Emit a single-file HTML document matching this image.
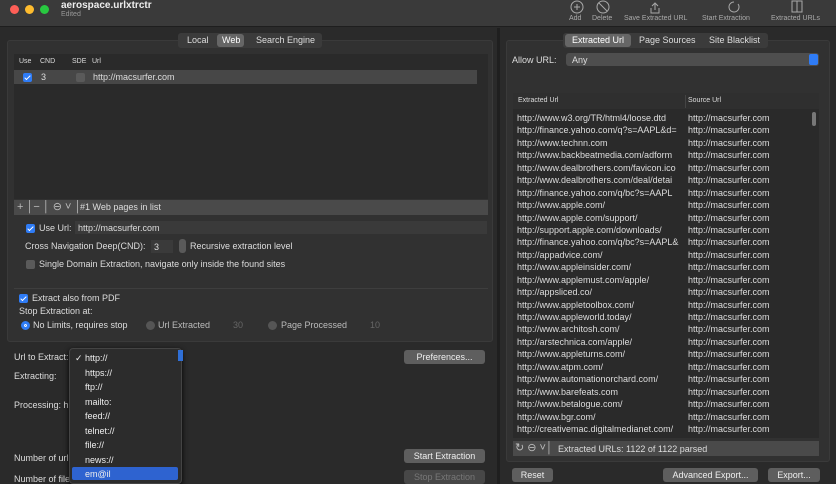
<!DOCTYPE html>
<html><head><meta charset="utf-8"><style>
*{box-sizing:border-box;margin:0;padding:0}
body{width:836px;height:484px;background:#2a2a2a;font-family:"Liberation Sans",sans-serif;font-size:9px;color:#ddd;position:relative;overflow:hidden}
.a{position:absolute;white-space:nowrap}
.btn{position:absolute;background:#5e5e5e;border-radius:3px;color:#eee;text-align:center;font-size:9px;line-height:14px}
.cb{position:absolute;width:9px;height:9px;border-radius:2px;background:#2f7cf6}
.cb::after{content:"";position:absolute;left:3px;top:1px;width:2px;height:5px;border:solid #fff;border-width:0 1.5px 1.5px 0;transform:rotate(45deg)}
.ucb{position:absolute;width:9px;height:9px;border-radius:2px;background:#5a5a5a}
.rows div{height:12.45px;line-height:12.45px}
.menu div{height:14.5px;line-height:14.5px;padding-left:10px}
</style></head><body>
<div class="a" style="left:0;top:0;width:836px;height:27px;background:#3a3a3a;border-bottom:1px solid #1e1e1e"></div>
<div class="a" style="left:10px;top:5px;width:9px;height:9px;border-radius:50%;background:#fe5f57"></div>
<div class="a" style="left:25px;top:5px;width:9px;height:9px;border-radius:50%;background:#febc2e"></div>
<div class="a" style="left:40px;top:5px;width:9px;height:9px;border-radius:50%;background:#28c840"></div>
<div class="a" style="left:61px;top:0px;font-size:10px;font-weight:bold;color:#eee">aerospace.urlxtrctr</div>
<div class="a" style="left:61px;top:11px;font-size:7px;color:#999">Edited</div>
<svg class="a" style="left:560px;top:0" width="276" height="26" fill="none" stroke="#aaa" stroke-width="1">
<circle cx="17" cy="7" r="6"/><path d="M17 4v6M14 7h6"/>
<circle cx="43" cy="7" r="6"/><path d="M39 3l8 8"/>
<path d="M95 4v6M92 6l3-3 3 3M91 8v5h8V8"/>
<path d="M174 2a5 5 0 1 0 4 2"/>
<rect x="232" y="1" width="10" height="11"/><path d="M237 1v11"/>
</svg>
<div class="a" style="left:569px;top:15px;font-size:7px;color:#aaa">Add</div>
<div class="a" style="left:592px;top:15px;font-size:7px;color:#aaa">Delete</div>
<div class="a" style="left:624px;top:15px;font-size:7px;color:#aaa">Save Extracted URL</div>
<div class="a" style="left:702px;top:15px;font-size:7px;color:#aaa">Start Extraction</div>
<div class="a" style="left:771px;top:15px;font-size:7px;color:#aaa">Extracted URLs</div>
<div class="a" style="left:497px;top:28px;width:3px;height:456px;background:#1f1f1f"></div>
<div class="a" style="left:7px;top:40px;width:486px;height:302px;background:#313131;border:1px solid #3a3a3a;border-radius:3px"></div>
<div class="a" style="left:178px;top:33px;width:144px;height:15px;background:#3b3b3b;border-radius:3px"></div>
<div class="a" style="left:217px;top:34px;width:27px;height:13px;background:#666;border-radius:3px"></div>
<div class="a" style="left:187px;top:35px;font-size:9px">Local</div>
<div class="a" style="left:222px;top:35px;font-size:9px;color:#fff">Web</div>
<div class="a" style="left:256px;top:35px;font-size:9px">Search Engine</div>
<div class="a" style="left:14px;top:54px;width:474px;height:145px;background:#2a2a2a"></div>
<div class="a" style="left:19px;top:58px;font-size:7px">Use</div>
<div class="a" style="left:40px;top:58px;font-size:7px">CND</div>
<div class="a" style="left:72px;top:58px;font-size:7px">SDE</div>
<div class="a" style="left:92px;top:58px;font-size:7px">Url</div>
<div class="a" style="left:14px;top:70px;width:463px;height:14px;background:#474747"></div>
<div class="cb" style="left:23px;top:73px"></div>
<div class="a" style="left:41px;top:72px">3</div>
<div class="ucb" style="left:76px;top:73px"></div>
<div class="a" style="left:93px;top:72px">http://macsurfer.com</div>
<div class="a" style="left:14px;top:200px;width:474px;height:15px;background:#4a4a4a"></div>
<div class="a" style="left:17px;top:200px;font-size:11px;color:#bbb">+ │− │ ⊖ ˅ │</div>
<div class="a" style="left:80px;top:202px">#1 Web pages in list</div>
<div class="cb" style="left:26px;top:224px"></div>
<div class="a" style="left:39px;top:223px">Use Url:</div>
<div class="a" style="left:75px;top:221px;width:412px;height:13px;background:#3a3a3a"></div>
<div class="a" style="left:78px;top:223px">http://macsurfer.com</div>
<div class="a" style="left:25px;top:241px">Cross Navigation Deep(CND):</div>
<div class="a" style="left:151px;top:240px;width:22px;height:13px;background:#3a3a3a"></div>
<div class="a" style="left:154px;top:242px">3</div>
<div class="a" style="left:179px;top:239px;width:7px;height:14px;background:#5a5a5a;border-radius:3px"></div>
<div class="a" style="left:190px;top:241px">Recursive extraction level</div>
<div class="ucb" style="left:26px;top:260px"></div>
<div class="a" style="left:39px;top:259px">Single Domain Extraction, navigate only inside the found sites</div>
<div class="a" style="left:14px;top:288px;width:474px;height:1px;background:#3e3e3e"></div>
<div class="cb" style="left:19px;top:294px"></div>
<div class="a" style="left:32px;top:293px">Extract also from PDF</div>
<div class="a" style="left:19px;top:306px">Stop Extraction at:</div>
<div class="a" style="left:21px;top:321px;width:9px;height:9px;border-radius:50%;background:#2f7cf6;border:3px solid #2f7cf6;box-shadow:inset 0 0 0 1px #fff"></div>
<div class="a" style="left:33px;top:320px">No Limits, requires stop</div>
<div class="a" style="left:146px;top:321px;width:9px;height:9px;border-radius:50%;background:#555"></div>
<div class="a" style="left:158px;top:320px;color:#bbb">Url Extracted</div>
<div class="a" style="left:233px;top:320px;color:#666">30</div>
<div class="a" style="left:268px;top:321px;width:9px;height:9px;border-radius:50%;background:#555"></div>
<div class="a" style="left:281px;top:320px;color:#bbb">Page Processed</div>
<div class="a" style="left:370px;top:320px;color:#666">10</div>
<div class="a" style="left:14px;top:352px">Url to Extract:</div>
<div class="a" style="left:14px;top:371px">Extracting:</div>
<div class="a" style="left:14px;top:400px">Processing: h</div>
<div class="a" style="left:14px;top:453px">Number of url</div>
<div class="a" style="left:14px;top:474px">Number of file</div>
<div class="btn" style="left:404px;top:350px;width:81px">Preferences...</div>
<div class="btn" style="left:404px;top:449px;width:81px">Start Extraction</div>
<div class="btn" style="left:404px;top:470px;width:81px;background:#474747;color:#777">Stop Extraction</div>
<div class="a" style="left:69px;top:348px;width:113px;height:136px;background:#2c2c2c;border:1px solid #444;border-radius:4px;box-shadow:0 2px 6px #000"></div>
<div class="a" style="left:178px;top:350px;width:5px;height:11px;background:#2f6fd6"></div>
<div class="a" style="left:72px;top:467px;width:106px;height:13px;background:#2e63d0;border-radius:2px"></div>
<div class="a menu" style="left:75px;top:351px;font-size:9px;color:#eee">
<div style="padding-left:0">✓ http://</div><div>https://</div><div>ftp://</div><div>mailto:</div><div>feed://</div><div>telnet://</div><div>file://</div><div>news://</div><div>em@il</div>
</div>
<div class="a" style="left:506px;top:40px;width:324px;height:422px;background:#313131;border:1px solid #3a3a3a;border-radius:3px"></div>
<div class="a" style="left:563px;top:33px;width:205px;height:15px;background:#3b3b3b;border-radius:3px"></div>
<div class="a" style="left:565px;top:34px;width:66px;height:13px;background:#666;border-radius:3px"></div>
<div class="a" style="left:572px;top:35px;color:#fff">Extracted Url</div>
<div class="a" style="left:639px;top:35px">Page Sources</div>
<div class="a" style="left:709px;top:35px">Site Blacklist</div>
<div class="a" style="left:512px;top:55px">Allow URL:</div>
<div class="a" style="left:566px;top:53px;width:253px;height:13px;background:#4e4e4e;border-radius:3px"></div>
<div class="a" style="left:572px;top:55px">Any</div>
<div class="a" style="left:809px;top:54px;width:9px;height:11px;background:#2f7cf6;border-radius:2px"></div>
<div class="a" style="left:513px;top:93px;width:306px;height:345px;background:#2a2a2a"></div>
<div class="a" style="left:513px;top:93px;width:306px;height:16px;background:#2f2f2f"></div>
<div class="a" style="left:685px;top:95px;width:1px;height:13px;background:#444"></div>
<div class="a" style="left:518px;top:97px;font-size:7px">Extracted Url</div>
<div class="a" style="left:688px;top:97px;font-size:7px">Source Url</div>
<div class="a" style="left:812px;top:112px;width:4px;height:14px;background:#777;border-radius:2px"></div>
<div class="a" style="left:517px;top:112px;width:166px;height:326px;overflow:hidden"><div class="rows">
<div>http://www.w3.org/TR/html4/loose.dtd</div><div>http://finance.yahoo.com/q?s=AAPL&amp;d=</div><div>http://www.technn.com</div><div>http://www.backbeatmedia.com/adform</div><div>http://www.dealbrothers.com/favicon.ico</div><div>http://www.dealbrothers.com/deal/detai</div><div>http://finance.yahoo.com/q/bc?s=AAPL</div><div>http://www.apple.com/</div><div>http://www.apple.com/support/</div><div>http://support.apple.com/downloads/</div><div>http://finance.yahoo.com/q/bc?s=AAPL&amp;</div><div>http://appadvice.com/</div><div>http://www.appleinsider.com/</div><div>http://www.applemust.com/apple/</div><div>http://appsliced.co/</div><div>http://www.appletoolbox.com/</div><div>http://www.appleworld.today/</div><div>http://www.architosh.com/</div><div>http://arstechnica.com/apple/</div><div>http://www.appleturns.com/</div><div>http://www.atpm.com/</div><div>http://www.automationorchard.com/</div><div>http://www.barefeats.com</div><div>http://www.betalogue.com/</div><div>http://www.bgr.com/</div><div>http://creativemac.digitalmedianet.com/</div></div></div>
<div class="a rows" style="left:688px;top:112px;height:326px;overflow:hidden">
<div>http://macsurfer.com</div><div>http://macsurfer.com</div><div>http://macsurfer.com</div><div>http://macsurfer.com</div><div>http://macsurfer.com</div><div>http://macsurfer.com</div><div>http://macsurfer.com</div><div>http://macsurfer.com</div><div>http://macsurfer.com</div><div>http://macsurfer.com</div><div>http://macsurfer.com</div><div>http://macsurfer.com</div><div>http://macsurfer.com</div><div>http://macsurfer.com</div><div>http://macsurfer.com</div><div>http://macsurfer.com</div><div>http://macsurfer.com</div><div>http://macsurfer.com</div><div>http://macsurfer.com</div><div>http://macsurfer.com</div><div>http://macsurfer.com</div><div>http://macsurfer.com</div><div>http://macsurfer.com</div><div>http://macsurfer.com</div><div>http://macsurfer.com</div><div>http://macsurfer.com</div></div>
<div class="a" style="left:513px;top:441px;width:306px;height:15px;background:#4a4a4a"></div>
<div class="a" style="left:515px;top:441px;font-size:11px;color:#bbb">↻ ⊖ ˅│</div>
<div class="a" style="left:558px;top:444px">Extracted URLs: 1122 of  1122 parsed</div>
<div class="btn" style="left:512px;top:468px;width:41px">Reset</div>
<div class="btn" style="left:663px;top:468px;width:95px">Advanced Export...</div>
<div class="btn" style="left:768px;top:468px;width:52px">Export...</div>
</body></html>
